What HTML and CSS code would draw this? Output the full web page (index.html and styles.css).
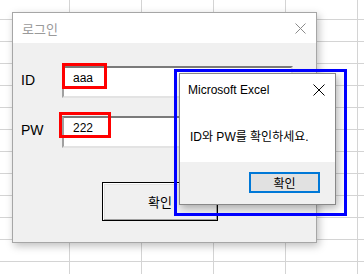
FILE: index.html
```html
<!DOCTYPE html>
<html lang="ko">
<head>
    <meta charset="UTF-8">
    <title>로그인</title>
    <link rel="stylesheet" href="styles.css">
</head>
<body>
<div class="sheet">
    <div class="login">
        <div class="login-title">
            <span>로그인</span>
            <svg class="close" width="11" height="11" viewBox="0 0 11 11"><path d="M0.5 0.5 L10.5 10.5 M10.5 0.5 L0.5 10.5" stroke="#8a8a8a" stroke-width="1"/></svg>
        </div>
        <div class="login-body">
            <div class="row">
                <label>ID</label>
                <div class="field">aaa</div>
            </div>
            <div class="row">
                <label>PW</label>
                <div class="field">222</div>
            </div>
            <div class="actions">
                <div class="btn">확인</div>
            </div>
        </div>
    </div>

    <div class="mark mark-id"></div>
    <div class="mark mark-pw"></div>

    <div class="msgbox">
        <div class="msg-title">
            <span>Microsoft Excel</span>
            <svg class="close" width="12" height="12" viewBox="0 0 12 12"><path d="M0.5 0.5 L11.5 11.5 M11.5 0.5 L0.5 11.5" stroke="#000" stroke-width="1"/></svg>
        </div>
        <div class="msg-text">ID와 PW를 확인하세요.</div>
        <div class="msg-foot">
            <div class="msg-btn">확인</div>
        </div>
    </div>

    <div class="mark-blue"></div>
</div>
</body>
</html>
```

FILE: styles.css
```css
body {
    margin: 0;
    font-family: "Liberation Sans", "Noto Sans CJK KR", sans-serif;
    font-size: 12px;
    color: #000;
}

.sheet {
    position: relative;
    width: 364px;
    height: 274px;
    overflow: hidden;
    background-color: #fff;
    background-image:
        linear-gradient(to right, #d4d4d4 1px, transparent 1px),
        linear-gradient(to bottom, #d4d4d4 1px, transparent 1px);
    background-size: 72px 100%, 100% 22px;
    background-position: 69px 0, 0 19px;
}

/* login form */
.login {
    position: absolute;
    left: 12px;
    top: 12px;
    width: 303px;
    height: 229px;
    border: 1px solid #a6a6a6;
    background: #f0f0f0;
    box-shadow: 2px 3px 8px rgba(0, 0, 0, 0.25);
    display: flex;
    flex-direction: column;
}

.login-title {
    height: 30px;
    background: #fff;
    display: flex;
    align-items: center;
    justify-content: space-between;
    padding: 0 9px 0 9px;
    color: #9a9a9a;
    font-size: 13px;
}

.login-title .close {
    margin-right: 1px;
}

.login-body {
    padding: 23px 0 0 8px;
    display: flex;
    flex-direction: column;
    gap: 18px;
}

.row {
    display: flex;
    align-items: center;
}

.row label {
    width: 41px;
    font-size: 14px;
    padding-bottom: 5px;
}

.field {
    width: 218px;
    height: 25px;
    background: #fff;
    border-top: 2px solid #7a7a7a;
    border-left: 2px solid #a0a0a0;
    border-bottom: 2px solid #e3e3e3;
    border-right: 2px solid #e3e3e3;
    padding: 3px 0 0 9px;
    box-sizing: content-box;
    font-size: 12px;
    line-height: 14px;
}

.actions {
    padding: 16px 0 0 81px;
}

.btn {
    width: 114px;
    height: 37px;
    border: 1px solid #000;
    background: #f0f0f0;
    box-shadow: inset 1px 1px 0 #fff, inset -1px -1px 0 #a0a0a0, inset 2px 2px 0 #e3e3e3;
    display: flex;
    align-items: center;
    justify-content: center;
    font-size: 13px;
}

/* red annotations */
.mark {
    position: absolute;
    border: 3px solid #ff0000;
}

.mark-id {
    left: 62px;
    top: 63px;
    width: 39px;
    height: 20px;
}

.mark-pw {
    left: 59px;
    top: 112px;
    width: 46px;
    height: 20px;
}

/* message box */
.msgbox {
    position: absolute;
    left: 179px;
    top: 73px;
    width: 155px;
    height: 130px;
    border: 1px solid #888;
    background: #fff;
    box-shadow: 2px 3px 8px rgba(0, 0, 0, 0.3);
    display: flex;
    flex-direction: column;
}

.msg-title {
    height: 31px;
    display: flex;
    align-items: center;
    justify-content: space-between;
    padding: 0 10px 0 8px;
}

.msg-text {
    flex: 1;
    padding: 22px 0 0 10px;
    box-sizing: border-box;
}

.msg-foot {
    height: 42px;
    background: #f0f0f0;
    display: flex;
    justify-content: flex-end;
    align-items: flex-start;
    padding: 10px 15px 0 0;
    box-sizing: border-box;
}

.msg-btn {
    width: 67px;
    height: 17px;
    border: 2px solid #0078d7;
    background: #e1e1e1;
    display: flex;
    align-items: center;
    justify-content: center;
}

.mark-blue {
    position: absolute;
    left: 174px;
    top: 69px;
    width: 167px;
    height: 141px;
    border: 3px solid #0000ff;
}
```
